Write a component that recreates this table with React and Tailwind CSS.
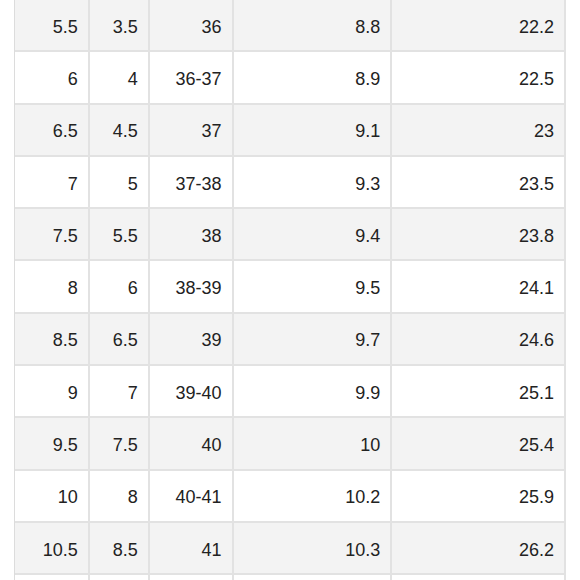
import React from "react";

const rows = [
  ["5.5", "3.5", "36", "8.8", "22.2"],
  ["6", "4", "36-37", "8.9", "22.5"],
  ["6.5", "4.5", "37", "9.1", "23"],
  ["7", "5", "37-38", "9.3", "23.5"],
  ["7.5", "5.5", "38", "9.4", "23.8"],
  ["8", "6", "38-39", "9.5", "24.1"],
  ["8.5", "6.5", "39", "9.7", "24.6"],
  ["9", "7", "39-40", "9.9", "25.1"],
  ["9.5", "7.5", "40", "10", "25.4"],
  ["10", "8", "40-41", "10.2", "25.9"],
  ["10.5", "8.5", "41", "10.3", "26.2"],
  ["", "", "", "", ""],
];

const widths = ["w-[75px]", "w-[60px]", "w-[84px]", "w-[159px]", "w-[174px]"];

const App = () => {
  return (
    <div className="w-[580px] h-[580px] overflow-hidden bg-white font-['Liberation_Sans',Arial,sans-serif] text-[18px] text-[#222]">
      <div className="ml-[14px] w-[552px] border-l border-[#dcdcdc]">
        {rows.map((row, i) => (
          <div
            key={i}
            className={`flex h-[52.3px] border-b-2 border-[#e2e2e2] ${
              i % 2 === 0 ? "bg-[#f3f3f3]" : "bg-white"
            }`}
          >
            {row.map((cell, j) => (
              <div
                key={j}
                className={`${widths[j]} flex items-center justify-end pt-[4px] pr-[10px] border-r-2 border-[#e2e2e2]`}
              >
                {cell}
              </div>
            ))}
          </div>
        ))}
      </div>
    </div>
  );
};

export default App;
